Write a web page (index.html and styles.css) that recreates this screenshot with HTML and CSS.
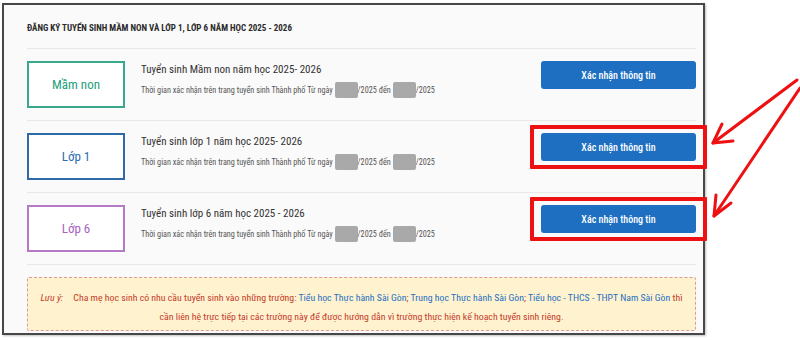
FILE: index.html
```html
<!DOCTYPE html>
<html lang="vi">
<head>
  <meta charset="UTF-8" />
  <title>Đăng ký tuyển sinh</title>
  <link rel="stylesheet" href="styles.css">
</head>
<body>
  <div class="frame">
    <div class="panel">
      <h2 class="panel-title">ĐĂNG KÝ TUYỂN SINH MẦM NON VÀ LỚP 1, LỚP 6 NĂM HỌC 2025 - 2026</h2>

      <div class="row">
        <div class="grade grade-mn">Mầm non</div>
        <div class="info">
          <div class="info-title">Tuyển sinh Mầm non năm học 2025- 2026</div>
          <div class="info-sub">Thời gian xác nhận trên trang tuyển sinh Thành phố Từ ngày <span class="blank"></span>/2025 đến <span class="blank"></span>/2025</div>
        </div>
        <div class="action"><button class="btn">Xác nhận thông tin</button></div>
      </div>

      <div class="row">
        <div class="grade grade-l1">Lớp 1</div>
        <div class="info">
          <div class="info-title">Tuyển sinh lớp 1 năm học 2025- 2026</div>
          <div class="info-sub">Thời gian xác nhận trên trang tuyển sinh Thành phố Từ ngày <span class="blank"></span>/2025 đến <span class="blank"></span>/2025</div>
        </div>
        <div class="action marked"><button class="btn">Xác nhận thông tin</button></div>
      </div>

      <div class="row">
        <div class="grade grade-l6">Lớp 6</div>
        <div class="info">
          <div class="info-title">Tuyển sinh lớp 6 năm học 2025 - 2026</div>
          <div class="info-sub">Thời gian xác nhận trên trang tuyển sinh Thành phố Từ ngày <span class="blank"></span>/2025 đến <span class="blank"></span>/2025</div>
        </div>
        <div class="action marked"><button class="btn">Xác nhận thông tin</button></div>
      </div>

      <div class="note">
        <span class="note-label">Lưu ý:</span>
        Cha mẹ học sinh có nhu cầu tuyển sinh vào những trường: <span class="link">Tiểu học Thực hành Sài Gòn</span>; <span class="link">Trung học Thực hành Sài Gòn</span>; <span class="link">Tiểu học - THCS - THPT Nam Sài Gòn</span> thì cần liên hệ trực tiếp tại các trường này để được hướng dẫn vì trường thực hiện kế hoạch tuyển sinh riêng.
      </div>
    </div>
  </div>

  <!-- mũi tên chú thích -->
  <svg class="arrows" width="800" height="340" viewBox="0 0 800 340">
    <g stroke="#ee1111" stroke-width="3" fill="none" stroke-linecap="round" stroke-linejoin="round">
      <path d="M797 80 L713 143" />
      <path d="M722 124 L713 143 L733 141" />
      <path d="M800 88 L714 216" />
      <path d="M716 195 L714 216 L731 203" />
    </g>
  </svg>
</body>
</html>
```

FILE: styles.css
```css
body {
  margin: 0;
  background: #fff;
  font-family: 'Roboto Condensed', 'Liberation Sans Narrow', Roboto, sans-serif;
  font-stretch: condensed;
  color: #333;
  width: 800px;
  height: 340px;
  overflow: hidden;
  position: relative;
}
.frame {
  margin: 3px 0 0 2px;
  width: 699px;
  height: 328px;
  border: 2px solid #474747;
  background: #fafafa;
  box-shadow: 1px 1px 2px rgba(0, 0, 0, 0.25);
}
.panel {
  padding: 0 7px 0 23px;
}
.panel-title {
  margin: 0;
  padding: 17px 0 14px;
  font-size: 9px;
  line-height: 12px;
  font-weight: bold;
  color: #2b2b2b;
  border-bottom: 1px solid #e8e8e8;
}
.row {
  display: flex;
  align-items: flex-start;
  padding: 12px 0;
  border-bottom: 1px solid #e8e8e8;
}
.grade {
  width: 94px;
  height: 43px;
  border: 2px solid;
  display: flex;
  align-items: center;
  justify-content: center;
  font-size: 13px;
  background: #fff;
}
.grade-mn { border-color: #3aa88d; color: #23a07c; }
.grade-l1 { border-color: #2d6aa7; color: #2a6db2; }
.grade-l6 { border-color: #b47ac5; color: #a862c0; }
.info {
  flex: 1;
  margin-left: 16px;
}
.info-title {
  font-size: 11px;
  line-height: 18px;
  color: #333;
}
.info-sub {
  margin-top: 3px;
  font-size: 8.2px;
  line-height: 16px;
  color: #555;
  display: flex;
  align-items: center;
  white-space: pre;
}
.blank {
  display: inline-block;
  width: 23px;
  height: 16px;
  background: #a9a9a9;
  border-radius: 2px;
}
.action {
  width: 155px;
  border: 4px solid transparent;
  padding: 4px 7px;
  margin: -8px -11px 0 0;
}
.action.marked {
  border-color: #ee1111;
  border-radius: 1px;
}
.btn {
  display: block;
  width: 155px;
  height: 28px;
  border: none;
  border-radius: 3px;
  background: #1e6fc2;
  color: #fff;
  font-family: inherit;
  font-stretch: condensed;
  font-size: 10px;
  font-weight: 500;
  cursor: pointer;
}
.note {
  margin-top: 12px;
  height: 39px;
  padding: 10px 5px 3px;
  background: #fff3cf;
  border: 1px dashed #d99a9a;
  border-radius: 2px;
  text-align: center;
  font-size: 9.8px;
  line-height: 19px;
  color: #c43a2b;
}
.note-label {
  font-style: italic;
  margin-right: 8px;
}
.link {
  color: #1f6fc3;
}
.arrows {
  position: absolute;
  left: 0;
  top: 0;
  pointer-events: none;
}
```
